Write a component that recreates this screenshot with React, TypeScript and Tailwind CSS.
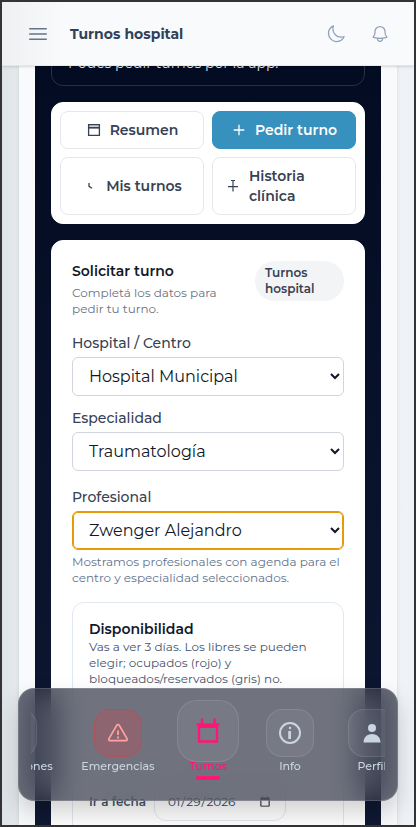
import React from "react";
import { HiOutlineBars3, HiOutlineBell, HiOutlineMoon } from "react-icons/hi2";

interface TabButtonProps {
  label: string;
  icon: React.ReactNode;
  active?: boolean;
}

const TabButton: React.FC<TabButtonProps> = ({ label, icon, active }) => (
  <button
    type="button"
    className={
      active
        ? "flex items-center justify-center gap-2 rounded-lg border border-[#3691be] bg-[#3691be] px-3 py-2 text-sm font-semibold text-white"
        : "flex items-center justify-center gap-2 rounded-lg border border-gray-200 bg-white px-3 py-2 text-sm font-semibold text-gray-700"
    }
  >
    {icon}
    <span className="text-left">{label}</span>
  </button>
);

interface SelectFieldProps {
  id: string;
  label: string;
  value: string;
  focused?: boolean;
}

const SelectField: React.FC<SelectFieldProps> = ({
  id,
  label,
  value,
  focused,
}) => (
  <div>
    <label htmlFor={id} className="block text-sm font-medium text-gray-700">
      {label}
    </label>
    <select
      id={id}
      defaultValue={value}
      className={
        focused
          ? "mt-1 block h-[39px] w-full rounded-md border border-[#e69a05] bg-white pl-3 text-base text-gray-900 ring-1 ring-[#e69a05] outline-none ring-inset"
          : "mt-1 block h-[39px] w-full rounded-md border border-gray-300 bg-white pl-3 text-base text-gray-900 outline-none"
      }
    >
      <option>{value}</option>
    </select>
  </div>
);

interface NavItemProps {
  label: string;
  width: string;
  icon: React.ReactNode;
  tone?: "default" | "danger" | "active";
}

const NavItem: React.FC<NavItemProps> = ({
  label,
  width,
  icon,
  tone = "default",
}) => {
  const boxes = {
    default: "mt-1 size-12 rounded-2xl border-white/10 bg-white/5 text-slate-300",
    danger:
      "mt-1 size-12 rounded-2xl border-red-500/30 bg-red-500/20 text-red-300",
    active:
      "size-[62px] rounded-[20px] border-white/10 bg-white/5 text-[#ff1478]",
  };
  return (
    <a href="#" className={`flex shrink-0 flex-col items-center ${width}`}>
      <span className="flex h-[62px] items-center">
        <span
          className={`flex items-center justify-center border ${boxes[tone]}`}
        >
          {icon}
        </span>
      </span>
      <span
        className={`text-[11px] leading-2 font-medium whitespace-nowrap ${tone === "active" ? "text-[#ff1478]" : "text-slate-300"}`}
      >
        {label}
      </span>
      {tone === "active" && (
        <span className="mt-1.5 h-1 w-6 rounded-full bg-[#ff1478]" />
      )}
    </a>
  );
};

const App: React.FC = () => {
  return (
    <div className="flex h-screen flex-col overflow-hidden border-2 border-[#343436] bg-[#eff3f8] font-[Montserrat,Inter,sans-serif]">
      <header className="z-10 flex h-16 shrink-0 items-center border-b border-slate-200 bg-[#f8fafc] bg-linear-to-r from-[#eff0f1] to-[#f8fafc] to-15% px-6 shadow-sm">
        <button type="button" aria-label="Abrir menú" className="text-slate-500">
          <HiOutlineBars3 size={24} />
        </button>
        <h1 className="ml-5 flex-1 text-sm font-bold text-slate-700">
          Turnos hospital
        </h1>
        <div className="flex items-center gap-6 text-slate-400">
          <button type="button" aria-label="Modo oscuro">
            <HiOutlineMoon size={20} />
          </button>
          <button type="button" aria-label="Notificaciones">
            <HiOutlineBell size={20} />
          </button>
        </div>
      </header>

      <div className="-mt-8.5 min-h-0 flex-1 overflow-hidden bg-linear-to-r from-[#dfe4e7] to-[#eff3f8] to-10% px-[17px]">
        <main className="bg-[#f8fafc] px-4 shadow-md">
          <div className="flex flex-col gap-4 bg-linear-to-b from-[#030b21] to-[#111a35] px-4 pb-16">
            <div className="rounded-xl border border-white/15 px-4 pt-5 pb-3 text-sm text-slate-200">
              Podés pedir turnos por la app.
            </div>

            <div className="grid grid-cols-2 gap-2 rounded-xl border border-white bg-white p-2">
              <TabButton
                label="Resumen"
                icon={
                  <svg width="16" height="16" viewBox="0 0 16 16" fill="none">
                    <path
                      d="M2.6 2.6h10.8v10.8H2.6z"
                      stroke="currentColor"
                      strokeWidth="1.3"
                    />
                    <path d="M3 3h10v2.500H3z" fill="currentColor" opacity=".25" />
                    <path d="M3 5h10v1.600H3z" fill="currentColor" />
                  </svg>
                }
              />
              <TabButton
                label="Pedir turno"
                active
                icon={
                  <svg width="16" height="16" viewBox="0 0 16 16" fill="none">
                    <path
                      d="M8 2.7v10.6M2.7 8h10.6"
                      stroke="currentColor"
                      strokeWidth="1.3"
                    />
                  </svg>
                }
              />
              <TabButton
                label="Mis turnos"
                icon={
                  <svg width="16" height="16" viewBox="0 0 16 16" fill="none">
                    <path
                      d="M7 5v3.3l3 2"
                      stroke="currentColor"
                      strokeWidth="1.3"
                    />
                  </svg>
                }
              />
              <TabButton
                label="Historia clínica"
                icon={
                  <svg
                    width="16"
                    height="16"
                    viewBox="0 0 16 16"
                    fill="none"
                    className="shrink-0"
                  >
                    <path
                      d="M8 2.5v11M3 8.6h10M6 2.5h4"
                      stroke="currentColor"
                      strokeWidth="1.2"
                    />
                  </svg>
                }
              />
            </div>

            <form className="rounded-xl border border-white bg-white p-5">
              <div className="flex items-start justify-between gap-3">
                <div className="w-[160px]">
                  <h2 className="text-sm font-semibold text-gray-900">
                    Solicitar turno
                  </h2>
                  <p className="mt-1 text-xs text-gray-500">
                    Completá los datos para pedir tu turno.
                  </p>
                </div>
                <span className="w-[89px] rounded-full bg-gray-100 px-2.5 py-1 text-xs font-semibold text-gray-700">
                  Turnos hospital
                </span>
              </div>

              <div className="mt-4 flex flex-col gap-3">
                <SelectField
                  id="hospital"
                  label="Hospital / Centro"
                  value="Hospital Municipal"
                />
                <SelectField
                  id="especialidad"
                  label="Especialidad"
                  value="Traumatología"
                />
              </div>
              <div className="mt-4">
                <SelectField
                  id="profesional"
                  label="Profesional"
                  value="Zwenger Alejandro"
                  focused
                />
                <p className="mt-1 text-xs text-slate-500">
                  Mostramos profesionales con agenda para el centro y
                  especialidad seleccionados.
                </p>
              </div>

              <section className="mt-4 rounded-xl border border-slate-200 p-4">
                <h3 className="text-sm font-semibold text-slate-900">
                  Disponibilidad
                </h3>
                <p className="text-xs text-slate-600">
                  Vas a ver 3 días. Los libres se pueden elegir; ocupados (rojo)
                  y bloqueados/reservados (gris) no.
                </p>
                <div className="mt-24 flex items-center gap-2">
                  <label
                    htmlFor="fecha"
                    className="text-xs font-semibold text-slate-600"
                  >
                    Ir a fecha
                  </label>
                  <input
                    id="fecha"
                    type="date"
                    defaultValue="2026-01-29"
                    className="h-[38px] w-[132px] rounded-xl border border-slate-200 bg-white px-3 text-xs text-slate-700"
                  />
                </div>
              </section>
            </form>
          </div>
        </main>
      </div>

      <nav className="fixed inset-x-[18px] bottom-[26px] z-20 rounded-2xl border border-white/15 bg-[#1f2435]/64 px-3 pt-[11px] pb-5 shadow-[0_12px_24px_rgba(0,0,0,0.18)] backdrop-blur-lg">
        <div className="overflow-hidden">
          {/* scrolled so that the active tab sits in the middle */}
          <div className="-ml-[69px] flex gap-2.5">
            <NavItem
              label="Notificaciones"
              width="w-[102px]"
              icon={<HiOutlineBell size={24} />}
            />
            <NavItem
              label="Emergencias"
              width="w-[88px]"
              tone="danger"
              icon={
                <svg width="24" height="24" viewBox="0 0 24 24" fill="none">
                  <path
                    d="M10.7 4.4 3 17.6c-.6 1.1 0 2 1.200 2h15.600c1.200 0 1.800-.9 1.200-2L13.300 4.400c-.6-1-2-1-2.600 0Z"
                    stroke="currentColor"
                    strokeWidth="1.7"
                    strokeLinejoin="round"
                  />
                  <path
                    d="M12 9.500v4.500M12 15.500v2"
                    stroke="currentColor"
                    strokeWidth="1.8"
                  />
                </svg>
              }
            />
            <NavItem
              label="Turnos"
              width="w-[72px]"
              tone="active"
              icon={
                <svg width="28" height="28" viewBox="0 0 28 28" fill="none">
                  <path
                    d="M3.500 7.500h21M8 2.500v5M20.500 2.500v5"
                    stroke="currentColor"
                    strokeWidth="2.400"
                    strokeLinecap="round"
                  />
                  <path
                    d="M5 9h18v15.500H5z"
                    stroke="currentColor"
                    strokeWidth="2.400"
                  />
                  <path d="M4 7h20v4H4z" fill="currentColor" />
                </svg>
              }
            />
            <NavItem
              label="Info"
              width="w-[72px]"
              icon={
                <svg width="24" height="24" viewBox="0 0 24 24" fill="none">
                  <circle
                    cx="12"
                    cy="12"
                    r="10"
                    stroke="currentColor"
                    strokeWidth="2"
                  />
                  <path
                    d="M11.600 10v8"
                    stroke="currentColor"
                    strokeWidth="2.800"
                  />
                  <circle cx="12" cy="7" r="1.200" fill="currentColor" />
                </svg>
              }
            />
            <NavItem
              label="Perfil"
              width="w-[72px]"
              icon={
                <svg width="24" height="24" viewBox="0 0 24 24">
                  <circle cx="12" cy="7" r="4" fill="currentColor" />
                  <path
                    d="M3.500 21.500c0-5 3.500-8.500 8.500-8.500s8.500 3.500 8.500 8.500z"
                    fill="currentColor"
                  />
                </svg>
              }
            />
          </div>
        </div>
      </nav>
    </div>
  );
};

export default App;
